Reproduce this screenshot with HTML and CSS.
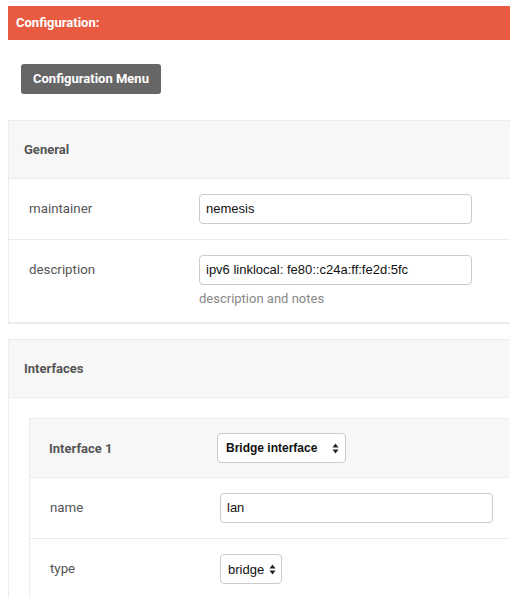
FILE: index.html
```html
<!DOCTYPE html>
<html>
<head>
<meta charset="utf-8">
<link rel="stylesheet" href="styles.css">
</head>
<body>
<div class="page">
  <div class="topbar">Configuration:</div>
  <div class="menu-row"><span class="btn">Configuration Menu</span></div>

  <div class="panel">
    <div class="panel-head"><span class="panel-title">General</span></div>
    <div class="row">
      <div class="label">maintainer</div>
      <div class="field"><div class="input">nemesis</div></div>
    </div>
    <div class="row">
      <div class="label">description</div>
      <div class="field">
        <div class="input">ipv6 linklocal: fe80::c24a:ff:fe2d:5fc</div>
        <div class="help">description and notes</div>
      </div>
    </div>
  </div>

  <div class="panel panel-second">
    <div class="panel-head"><span class="panel-title">Interfaces</span></div>
    <div class="panel-body">
      <div class="panel inner">
        <div class="panel-head inner-head">
          <span class="panel-title inner-title">Interface 1</span>
          <div class="select select-bold">Bridge interface<svg class="arrows" width="7" height="11" viewBox="0 0 7 11"><path d="M3.5 0.5 L6.5 4.5 L0.5 4.5 Z M3.5 10.5 L0.5 6.5 L6.5 6.5 Z" fill="#222"/></svg></div>
        </div>
        <div class="row">
          <div class="label">name</div>
          <div class="field"><div class="input">lan</div></div>
        </div>
        <div class="row">
          <div class="label">type</div>
          <div class="field"><div class="select select-small">bridge<svg class="arrows" width="7" height="11" viewBox="0 0 7 11"><path d="M3.5 0.5 L6.5 4.5 L0.5 4.5 Z M3.5 10.5 L0.5 6.5 L6.5 6.5 Z" fill="#222"/></svg></div></div>
        </div>
      </div>
    </div>
  </div>
</div>
</body>
</html>
```
FILE: styles.css
```css
html, body {
  margin: 0;
  padding: 0;
  overflow: hidden;
  background: #fff;
}
.page {
  padding: 6px 0 0 8px;
  width: 560px;
  font-family: Roboto, "Liberation Sans", sans-serif;
  color: #555;
}
.topbar {
  height: 34px;
  background: #e85b41;
  color: #fff;
  font-weight: bold;
  font-size: 13px;
  line-height: 34px;
  padding-left: 8px;
}
.menu-row {
  padding: 24px 0 26px 13px;
  display: flex;
}
.btn {
  display: inline-block;
  background: #666;
  color: #fff;
  font-weight: bold;
  font-size: 13px;
  height: 30px;
  line-height: 30px;
  padding: 0 12px;
  border-radius: 3px;
  white-space: nowrap;
}
.panel {
  border: 1px solid #ececec;
  border-bottom-width: 2px;
}
.panel-second {
  margin-top: 15px;
}
.panel-head {
  background: #f7f7f7;
  height: 57px;
  border-bottom: 1px solid #ececec;
  display: flex;
  align-items: center;
  padding-left: 15px;
}
.panel-title {
  font-weight: bold;
  font-size: 13px;
  color: #555;
}
.row {
  display: flex;
  align-items: flex-start;
  padding: 15px 0 15px 20px;
  border-bottom: 1px solid #ececec;
}
.row:last-child {
  border-bottom: none;
}
.label {
  width: 170px;
  font-size: 13.3px;
  line-height: 30px;
  color: #555;
}
.field {
  display: flex;
  flex-direction: column;
}
.input {
  width: 261px;
  height: 28px;
  border: 1px solid #ccc;
  border-radius: 4px;
  padding: 0 4px 0 6px;
  font-family: "Liberation Sans", Arial, sans-serif;
  font-size: 13px;
  color: #111;
  line-height: 28px;
  white-space: nowrap;
  overflow: hidden;
}
.help {
  font-size: 13px;
  color: #888;
  margin-top: 6px;
  line-height: 16px;
}
.panel-body {
  padding: 20px 0 0 20px;
}
.inner {
  border-bottom: none;
}
.inner-head {
  padding-left: 19px;
  height: 58px;
}
.inner-title {
  width: 168px;
}
.select {
  display: flex;
  align-items: center;
  height: 28px;
  border: 1px solid #ccc;
  border-radius: 4px;
  background: #fff;
  font-family: "Liberation Sans", Arial, sans-serif;
  font-size: 13px;
  color: #111;
}
.select-bold {
  width: 113px;
  padding: 0 6px 0 8px;
  font-size: 12px;
  font-weight: bold;
  justify-content: space-between;
}
.select-small {
  padding: 0 5px 0 7px;
  gap: 5px;
  align-self: flex-start;
}
.arrows {
  display: block;
}
```
